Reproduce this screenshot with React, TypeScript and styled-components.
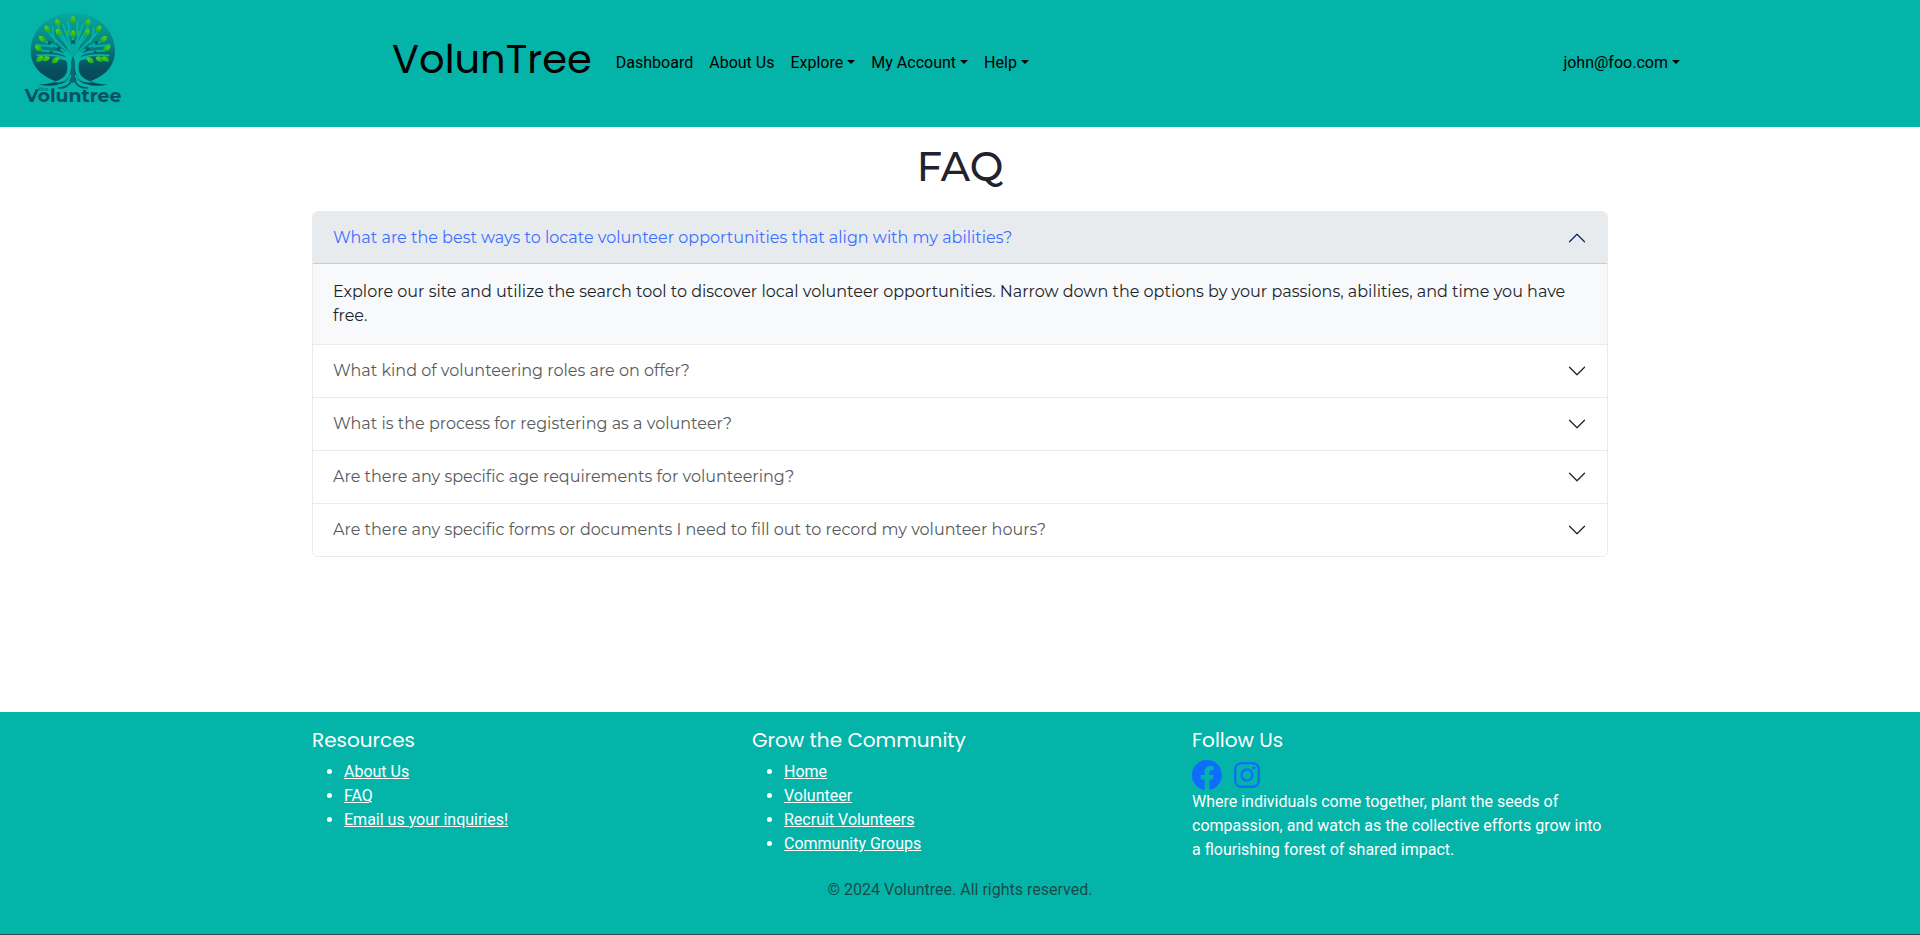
import React from 'react';
import styled, { createGlobalStyle } from 'styled-components';
import { BsFacebook, BsInstagram } from 'react-icons/bs';

const teal = '#04b4a9';

const GlobalStyle = createGlobalStyle`
  *, *::before, *::after { box-sizing: border-box; }
  body {
    margin: 0;
    background: #fff;
    color: #212529;
    font: 400 16px/1.5 Roboto, 'Liberation Sans', sans-serif;
  }
`;

const Page = styled.div`
  display: flex;
  flex-direction: column;
  height: 935px;
  overflow: hidden;
`;

const Header = styled.header`
  display: flex;
  flex: none;
  height: 127px;
  background: ${teal};
`;

const LogoLink = styled.a`
  flex: none;
  width: 160px;
  svg { display: block; }
`;

const Navbar = styled.nav`
  display: flex;
  align-items: center;
  width: 1320px;
  height: 124px;
  margin: 0 auto;
  padding: 0 12px;
`;

const Brand = styled.a`
  margin-right: 16px;
  padding-bottom: 6px;
  font-family: Poppins, sans-serif;
  font-size: 40px;
  line-height: 60px;
  color: #000;
`;

const NavGroup = styled.div<{ $end?: boolean }>`
  display: flex;
  margin-left: ${(p) => (p.$end ? 'auto' : '0')};
`;

const NavLink = styled.a<{ $caret?: boolean }>`
  padding: 9px 8px 7px;
  color: #000;
  ${(p) => p.$caret && `
    &::after {
      content: '';
      display: inline-block;
      margin-left: 4.08px;
      vertical-align: 4.08px;
      border-top: 4.8px solid;
      border-right: 4.8px solid transparent;
      border-left: 4.8px solid transparent;
    }
  `}
`;

const Main = styled.main`
  display: flex;
  flex-direction: column;
  flex: none;
  width: 1296px;
  height: 585px;
  margin: 0 auto;
  padding-top: 16px;
  font-family: Montserrat, sans-serif;
`;

const Title = styled.h1`
  margin: 0 0 20px;
  font-size: 40px;
  font-weight: 500;
  line-height: 48px;
  text-align: center;
  color: #22222e;
`;

const Accordion = styled.div`
  border: 1px solid #e9eaeb;
  border-radius: 6px;
  overflow: hidden;
`;

const Item = styled.section`
  & + & { border-top: 1px solid #e9eaeb; }
`;

const Question = styled.button<{ $open?: boolean }>`
  display: flex;
  align-items: center;
  justify-content: space-between;
  width: 100%;
  height: 52px;
  padding: 0 20px;
  border: 0;
  font: 400 16px/20px Montserrat, sans-serif;
  text-align: left;
  color: ${(p) => (p.$open ? '#3d6fff' : '#585b5e')};
  background: ${(p) => (p.$open ? '#e8ebee' : '#fff')};
  box-shadow: ${(p) => (p.$open ? 'inset 0 -1px 0 #c8ccd0' : 'none')};
  svg {
    flex: none;
    color: ${(p) => (p.$open ? '#052c65' : '#212529')};
    transform: ${(p) => (p.$open ? 'rotate(180deg)' : 'none')};
  }
`;

const Answer = styled.div`
  padding: 16px 20px;
  background: #f8f9fb;
`;

const Footer = styled.footer`
  flex: 1;
  display: flex;
  flex-direction: column;
  align-items: center;
  padding-top: 16px;
  background: ${teal};
  border-bottom: 1px solid #3f4347;
`;

const Columns = styled.div`
  display: grid;
  grid-template-columns: repeat(3, 416px);
  column-gap: 24px;
  height: 150px;
  color: #fff;
`;

const ColumnTitle = styled.h5`
  margin: 0 0 8px;
  font: 400 20px/24px Poppins, sans-serif;
`;

const LinkList = styled.ul`
  margin: 0;
  padding-left: 32px;
`;

const FooterLink = styled.a`
  color: #fff;
  text-decoration: underline;
`;

const Social = styled.div`
  display: flex;
  align-items: center;
  gap: 12px;
  height: 30px;
  color: #0d6efd;
`;

const Blurb = styled.p`
  margin: 0;
`;

const Copyright = styled.p`
  margin: 0;
  color: rgba(33, 37, 41, 0.75);
`;

const leaves: [number, number, number][] = [
  [219, 60, 0], [174, 69, -25], [263, 69, 25], [142, 87, -35], [295, 87, 35],
  [127, 117, -50], [310, 117, 50], [176, 98, -35], [261, 98, 25], [219, 102, 0],
  [116, 145, -60], [320, 145, 60], [119, 177, 55], [137, 176, 70], [166, 181, 50],
  [271, 181, -50], [299, 177, -65], [317, 177, -60],
];

const branches = [
  'M208 176 C196 158 165 154 124 152',
  'M208 182 C190 164 150 164 112 166',
  'M206 186 C192 172 180 172 164 178',
  'M208 172 C196 150 165 136 128 122',
  'M210 168 C196 140 162 122 144 94',
  'M212 160 C204 134 190 122 178 106',
  'M213 156 C204 120 184 110 174 78',
  'M215 150 C212 128 202 118 190 74',
  'M219 150 L219 112',
  'M206 106 C208 94 208 84 204 64',
  'M168 126 C160 112 156 104 158 82',
  'M156 140 C140 134 124 140 108 134',
];

const Logo = () => (
  <svg width="160" height="127" viewBox="0 0 480 381" fill="none">
    <defs>
      <linearGradient id="crown" x1="0" y1="0" x2="0" y2="1">
        <stop offset="0" stopColor="#08a9a0" />
        <stop offset="0.45" stopColor="#077f83" />
        <stop offset="0.75" stopColor="#06505f" />
        <stop offset="1" stopColor="#06475a" />
      </linearGradient>
      <linearGradient id="leaf" x1="0" y1="0" x2="0" y2="1">
        <stop offset="0" stopColor="#5fd60c" />
        <stop offset="1" stopColor="#12a52e" />
      </linearGradient>
    </defs>
    <path d="M219 38 C290 38 345 88 345 153 C345 194 317 228 272 243 C288 251 304 253 322 254 C290 260 262 258 240 246 L219 238 L198 246 C176 258 148 260 115 254 C134 253 150 251 166 243 C121 228 92 194 92 153 C92 88 148 38 219 38Z" fill="url(#crown)" />
    {['', 'translate(438 0) scale(-1 1)'].map((side) => (
      <g key={side} transform={side} stroke={teal} strokeLinecap="round">
        {branches.map((d) => <path key={d} d={d} strokeWidth="5.5" />)}
        <path d="M190 158 C203 176 205 206 200 218 C194 234 178 241 160 246 C176 249 190 246 199 239 C211 228 214 206 214 184 L219 156Z" fill={teal} strokeWidth="1" />
        <path d="M172 257 C192 256 206 246 212 226" strokeWidth="6" />
        <path d="M176 264 C198 264 210 254 216 238" stroke="#075e69" strokeWidth="5" />
        <circle cx="149" cy="128" r="5.5" fill="#075c6b" stroke="none" />
        <circle cx="176" cy="146" r="6" fill="#075c6b" stroke="none" />
        <circle cx="153" cy="157" r="4.5" fill="#075c6b" stroke="none" />
        <circle cx="202" cy="96" r="5" fill="#35b51c" stroke="none" />
      </g>
    ))}
    <path d="M200 146 Q219 126 238 146 L228 166 Q219 174 210 166Z" fill="#06a9a0" />
    <path d="M219 182 V248" stroke="#076a73" strokeWidth="10" />
    <circle cx="219" cy="126" r="6" fill="#075c6b" />
    {leaves.map(([x, y, angle]) => (
      <path key={`${x}-${y}`} d="M0 -13 C10 -6 10 6 0 13 C-10 6 -10 -6 0 -13Z" fill="url(#leaf)" transform={`translate(${x} ${y}) rotate(${angle})`} />
    ))}
    <text x="74" y="306" fill="#06505f" fontFamily="Montserrat, sans-serif" fontWeight="700" fontSize="54" textLength="290" lengthAdjust="spacingAndGlyphs">Voluntree</text>
    <text x="116" y="274" fill="#087c80" fontFamily="Montserrat, sans-serif" fontWeight="700" fontSize="14" textLength="30" lengthAdjust="spacingAndGlyphs">the</text>
  </svg>
);

const Chevron = () => (
  <svg width="20" height="20" viewBox="0 0 16 16" fill="none" stroke="currentColor" strokeLinecap="round" strokeLinejoin="round">
    <path d="m2 5 6 6 6-6" />
  </svg>
);

const navLinks = [
  { label: 'Dashboard' },
  { label: 'About Us' },
  { label: 'Explore', caret: true },
  { label: 'My Account', caret: true },
  { label: 'Help', caret: true },
];

const faqs = [
  {
    question: 'What are the best ways to locate volunteer opportunities that align with my abilities?',
    answer: 'Explore our site and utilize the search tool to discover local volunteer opportunities. Narrow down the options by your passions, abilities, and time you have free.',
  },
  { question: 'What kind of volunteering roles are on offer?' },
  { question: 'What is the process for registering as a volunteer?' },
  { question: 'Are there any specific age requirements for volunteering?' },
  { question: 'Are there any specific forms or documents I need to fill out to record my volunteer hours?' },
];

const footerLists = [
  { title: 'Resources', links: ['About Us', 'FAQ', 'Email us your inquiries!'] },
  { title: 'Grow the Community', links: ['Home', 'Volunteer', 'Recruit Volunteers', 'Community Groups'] },
];

export default function App() {
  return (
    <Page>
      <GlobalStyle />
      <Header>
        <LogoLink><Logo /></LogoLink>
        <Navbar>
          <Brand>VolunTree</Brand>
          <NavGroup>
            {navLinks.map((l) => <NavLink key={l.label} $caret={l.caret}>{l.label}</NavLink>)}
          </NavGroup>
          <NavGroup $end><NavLink $caret>john@foo.com</NavLink></NavGroup>
        </Navbar>
      </Header>
      <Main>
        <Title>FAQ</Title>
        <Accordion>
          {faqs.map((f) => (
            <Item key={f.question}>
              <Question $open={!!f.answer}>{f.question}<Chevron /></Question>
              {f.answer && <Answer>{f.answer}</Answer>}
            </Item>
          ))}
        </Accordion>
      </Main>
      <Footer>
        <Columns>
          {footerLists.map((list) => (
            <div key={list.title}>
              <ColumnTitle>{list.title}</ColumnTitle>
              <LinkList>
                {list.links.map((link) => <li key={link}><FooterLink>{link}</FooterLink></li>)}
              </LinkList>
            </div>
          ))}
          <div>
            <ColumnTitle>Follow Us</ColumnTitle>
            <Social><BsFacebook size={30} /><BsInstagram size={26} /></Social>
            <Blurb>
              Where individuals come together, plant the seeds of compassion, and watch as the
              collective efforts grow into a flourishing forest of shared impact.
            </Blurb>
          </div>
        </Columns>
        <Copyright>© 2024 Voluntree. All rights reserved.</Copyright>
      </Footer>
    </Page>
  );
}
